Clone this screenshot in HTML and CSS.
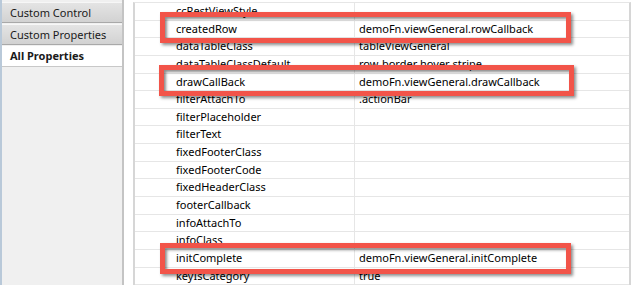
FILE: index.html
```html
<!DOCTYPE html>
<html>
<head>
<meta charset="utf-8">
<link rel="stylesheet" href="styles.css">
</head>
<body>
<div class="window">
	<div class="tabs">
		<div class="tab">Custom Control</div>
		<div class="tab">Custom Properties</div>
		<div class="tab active">All Properties</div>
		<div class="panel"></div>
	</div>

	<div class="props">
		<div class="row"><span class="name">ccRestViewStyle</span><span class="value"></span></div>
		<div class="row"><span class="name">createdRow</span><span class="value">demoFn.viewGeneral.rowCallback</span></div>
		<div class="row"><span class="name">dataTableClass</span><span class="value">tableViewGeneral</span></div>
		<div class="row"><span class="name">dataTableClassDefault</span><span class="value">row-border hover stripe</span></div>
		<div class="row"><span class="name">drawCallBack</span><span class="value">demoFn.viewGeneral.drawCallback</span></div>
		<div class="row"><span class="name">filterAttachTo</span><span class="value">.actionBar</span></div>
		<div class="row"><span class="name">filterPlaceholder</span><span class="value"></span></div>
		<div class="row"><span class="name">filterText</span><span class="value"></span></div>
		<div class="row"><span class="name">fixedFooterClass</span><span class="value"></span></div>
		<div class="row"><span class="name">fixedFooterCode</span><span class="value"></span></div>
		<div class="row"><span class="name">fixedHeaderClass</span><span class="value"></span></div>
		<div class="row"><span class="name">footerCallback</span><span class="value"></span></div>
		<div class="row"><span class="name">infoAttachTo</span><span class="value"></span></div>
		<div class="row"><span class="name">infoClass</span><span class="value"></span></div>
		<div class="row"><span class="name">initComplete</span><span class="value">demoFn.viewGeneral.initComplete</span></div>
		<div class="row"><span class="name">keyIsCategory</span><span class="value">true</span></div>

		<!-- annotation boxes -->
		<div class="mark mark-1"></div>
		<div class="mark mark-2"></div>
		<div class="mark mark-3"></div>
	</div>
</div>
</body>
</html>
```

FILE: styles.css
```css
body {
	margin: 0;
	background: #ffffff;
	font-family: "Noto Sans", sans-serif;
	font-size: 11px;
	color: #000000;
	overflow: hidden;
}

.window {
	display: flex;
	height: 285px;
}

/* left side tabs */
.tabs {
	width: 120px;
	display: flex;
	flex-direction: column;
	border-left: 2px solid #b9c9d9;
	border-right: 2px solid #c4c4c4;
	background: #f0f0f0;
	padding-top: 3px;
}

.tab {
	height: 19px;
	line-height: 19px;
	padding-left: 8px;
	background: linear-gradient(#e4e4e4, #d2d2d2);
	border-top: 1px solid #f7f7f7;
	border-bottom: 1px solid #a9a9a9;
	margin-bottom: 1px;
	color: #1a1a1a;
}

.tab:first-child {
	margin-top: -1px;
}

.tab.active {
	background: #ffffff;
	font-weight: bold;
	border-top: none;
	border-bottom: 1px solid #c8c8c8;
	height: 20px;
	margin-bottom: 0;
}

.panel {
	flex: 1;
	background: #f0f0f0;
}

/* property grid */
.props {
	position: relative;
	margin-left: 9px;
	width: 494px;
	border-left: 2px solid #d6d6d6;
	border-right: 2px solid #d6d6d6;
	border-top: 1px solid #e6e6e6;
	margin-top: 2px;
}

.row {
	display: flex;
	height: 17.65px;
	box-sizing: border-box;
	border-bottom: 1px solid #e6e6e6;
	line-height: 16px;
}

.name {
	width: 220px;
	padding-left: 41px;
	box-sizing: border-box;
	border-right: 1px solid #e6e6e6;
	white-space: nowrap;
	overflow: hidden;
}

.value {
	flex: 1;
	padding-left: 4px;
	white-space: nowrap;
}

.mark {
	position: absolute;
	border: 5px solid #f25449;
	box-shadow: 2px 2px 3px rgba(0, 0, 0, 0.45), inset 2px 2px 3px rgba(0, 0, 0, 0.45);
	height: 21px;
	width: 401px;
	left: 25px;
}

.mark-1 {
	top: 9px;
}

.mark-2 {
	top: 62px;
	left: 24px;
	width: 405px;
}

.mark-3 {
	top: 240px;
}
```
